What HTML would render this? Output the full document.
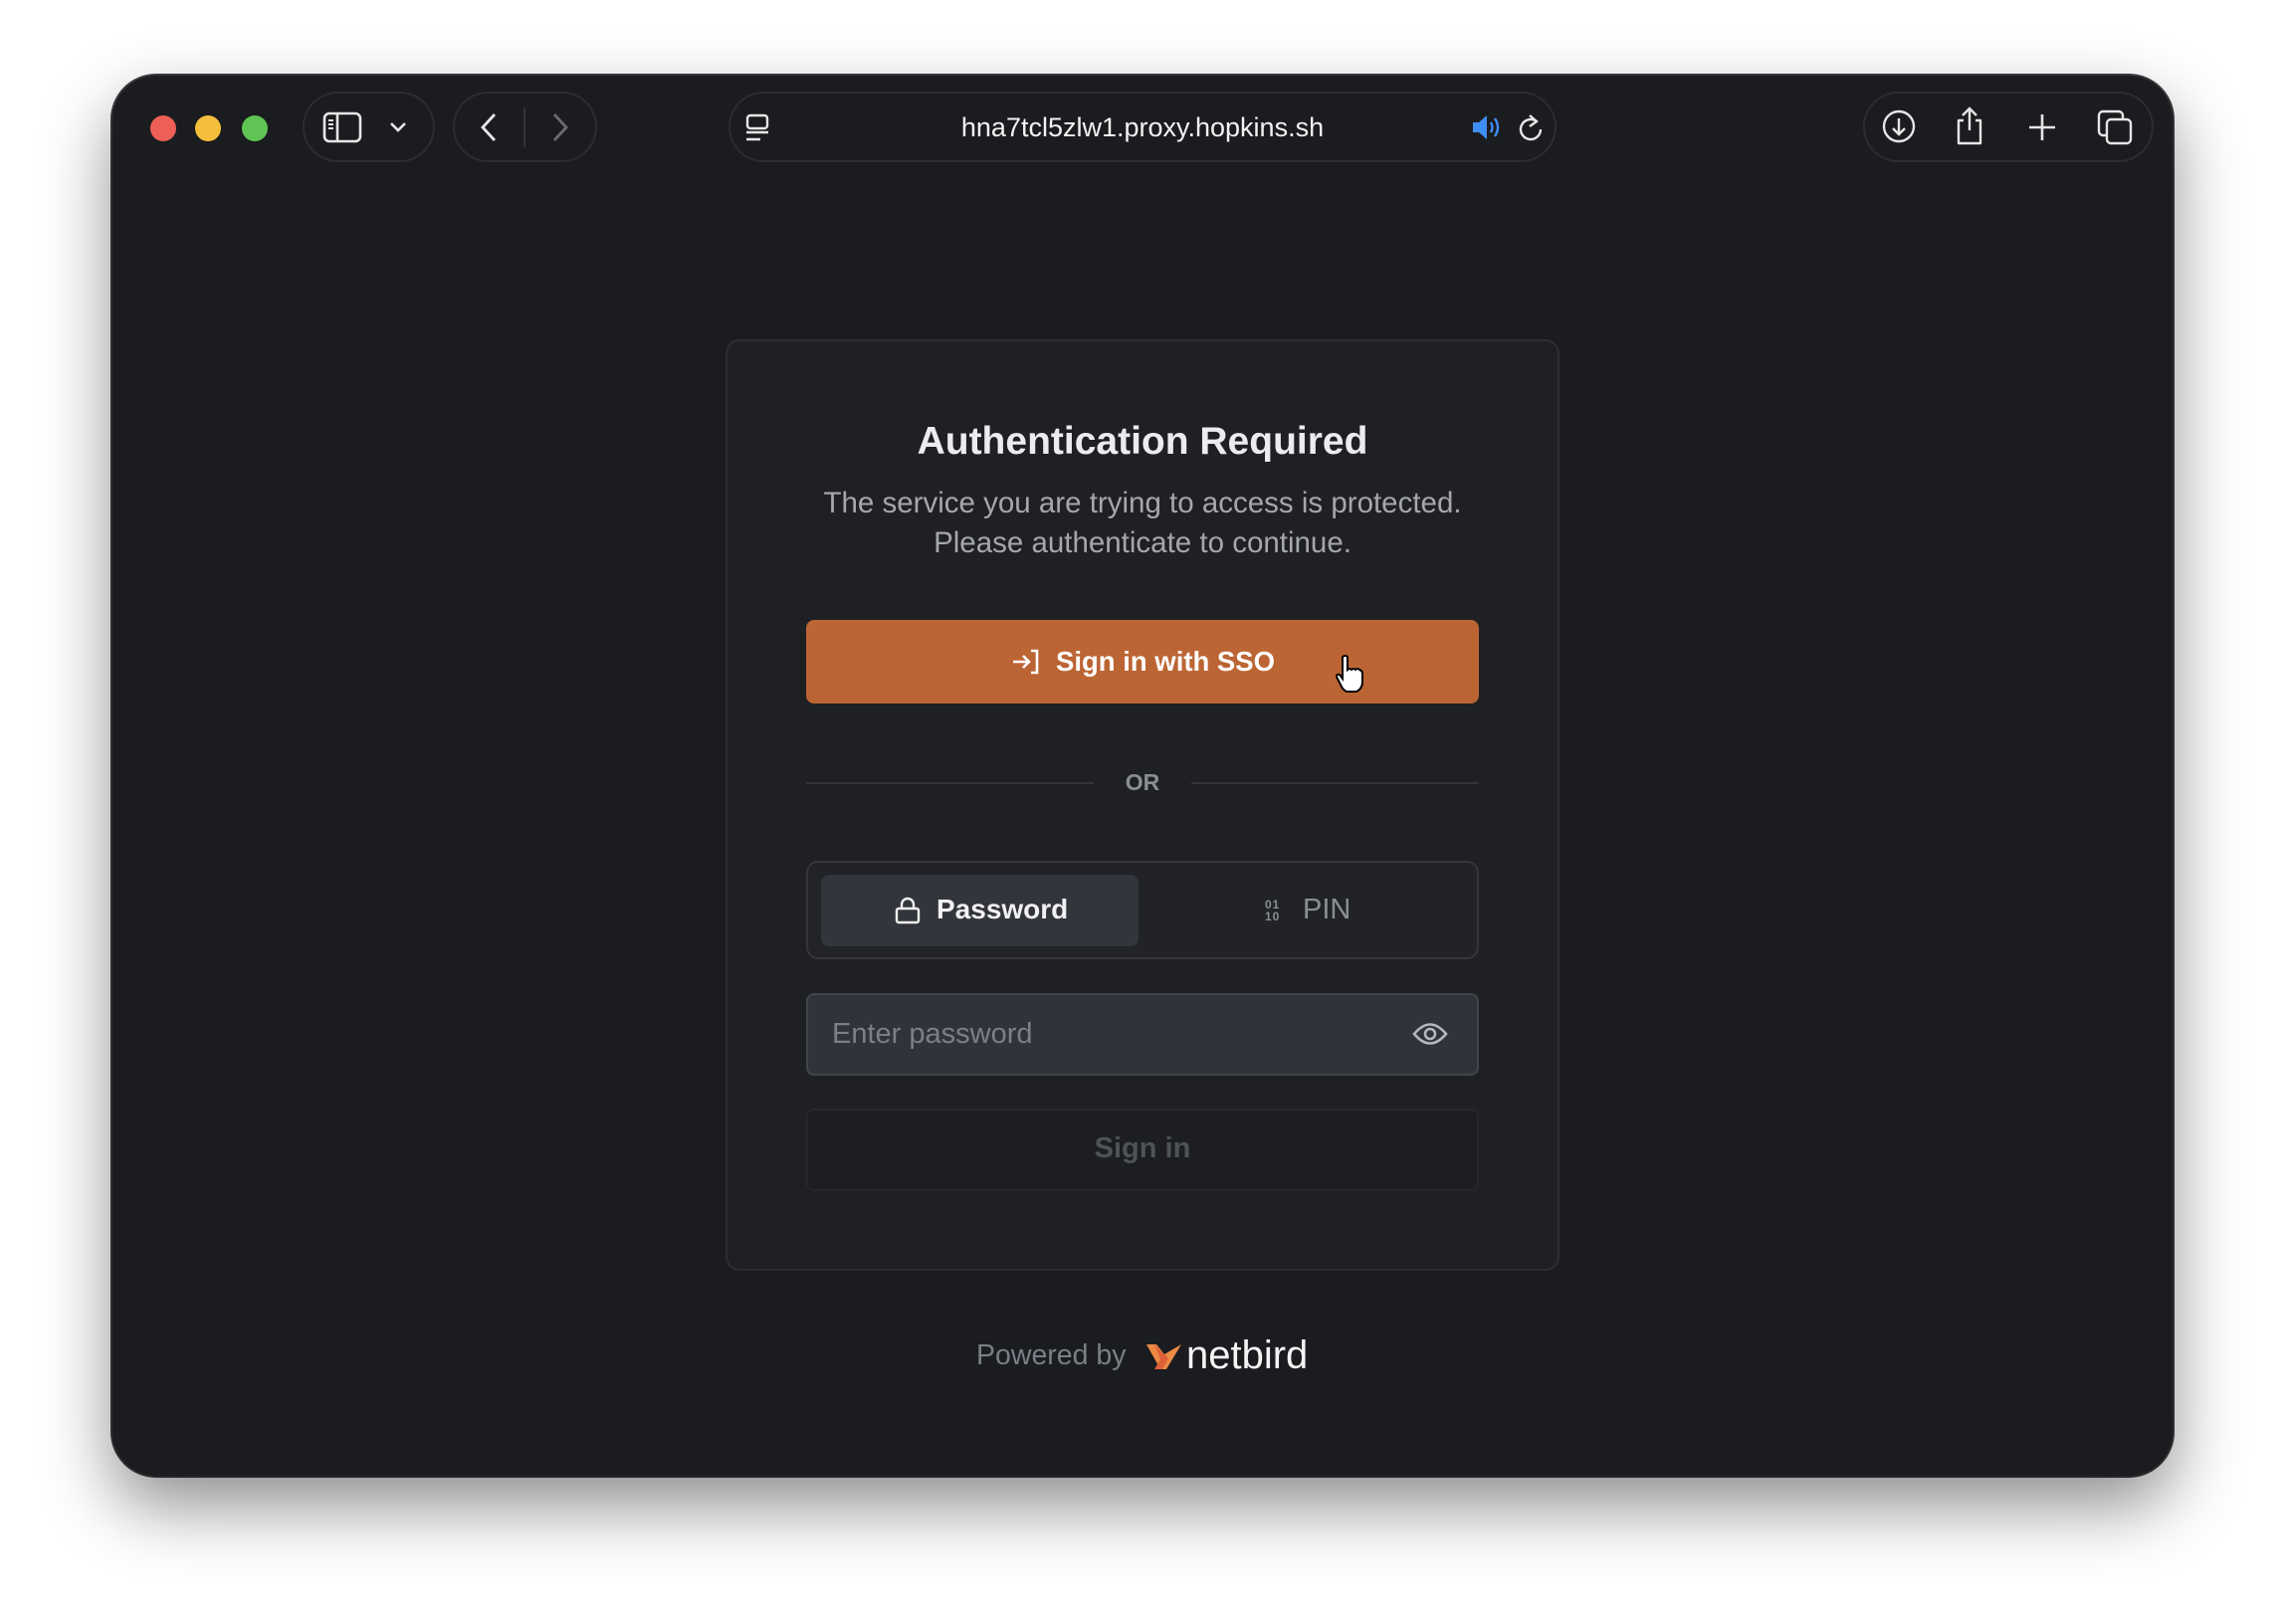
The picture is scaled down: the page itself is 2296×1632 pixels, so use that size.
<!DOCTYPE html>
<html><head><meta charset="utf-8"><style>
*{margin:0;padding:0;box-sizing:border-box}
html,body{width:2296px;height:1632px;background:#fff;overflow:hidden;font-family:"Liberation Sans",sans-serif}
.win{position:absolute;left:113px;top:76px;width:2070px;height:1407px;background:#1b1c1f;border-radius:44px;box-shadow:0 30px 70px rgba(0,0,0,.45),0 0 0 2px #3a3b3e;overflow:hidden}
.abs{position:absolute}
.dot{position:absolute;top:116px;width:26px;height:26px;border-radius:50%}
.pill{position:absolute;top:92px;height:71px;border:2px solid #2c2d31;border-radius:36px}
svg{position:absolute;overflow:visible}
.card{position:absolute;left:729px;top:341px;width:838px;height:936px;background:#1f2024;border:2px solid #2c2e33;border-radius:14px}
.c{position:absolute;left:0;width:100%;text-align:center}
</style></head><body>
<div class="win"></div>
<div class="dot" style="left:151px;background:#ed5f57"></div>
<div class="dot" style="left:196px;background:#f4be3b"></div>
<div class="dot" style="left:243px;background:#5fc453"></div>

<div class="pill" style="left:304px;width:133px"></div>
<svg style="left:324px;top:112px" width="40" height="32" viewBox="0 0 40 32"><rect x="2" y="2" width="36" height="28" rx="5" fill="none" stroke="#e6e6e6" stroke-width="2.6"/><line x1="15" y1="2" x2="15" y2="30" stroke="#e6e6e6" stroke-width="2.6"/><path d="M6 9h5M6 13h5M6 17h5" stroke="#e6e6e6" stroke-width="2"/></svg>
<svg style="left:391px;top:122px" width="18" height="12" viewBox="0 0 18 12"><path d="M2 2l7 7 7-7" fill="none" stroke="#e6e6e6" stroke-width="2.6"/></svg>

<div class="pill" style="left:455px;width:145px"></div>
<svg style="left:482px;top:113px" width="18" height="30" viewBox="0 0 18 30"><path d="M15 2L3 15l12 13" fill="none" stroke="#e6e6e6" stroke-width="2.8"/></svg>
<div class="abs" style="left:526px;top:108px;width:2px;height:40px;background:#333"></div>
<svg style="left:554px;top:113px" width="18" height="30" viewBox="0 0 18 30"><path d="M3 2l12 13L3 28" fill="none" stroke="#6a6b6e" stroke-width="2.8"/></svg>

<div class="pill" style="left:732px;width:832px"></div>
<svg style="left:749px;top:114px" width="24" height="30" viewBox="0 0 24 30"><rect x="2" y="2" width="20" height="13" rx="3" fill="none" stroke="#e6e6e6" stroke-width="2.4"/><path d="M1 19h22M1 26h14" stroke="#e6e6e6" stroke-width="2.4"/></svg>
<div class="abs" style="left:832px;top:110px;width:632px;text-align:center;color:#f2f2f2;font-size:27px;line-height:36px">hna7tcl5zlw1.proxy.hopkins.sh</div>
<svg style="left:1479px;top:115px" width="30" height="26" viewBox="0 0 30 26"><path d="M1 8h6l8-7v24l-8-7H1z" fill="#3f8ef5"/><path d="M19 8q3 5 0 10M23 4q6 9 0 18" fill="none" stroke="#3f8ef5" stroke-width="2.4"/></svg>
<svg style="left:1524px;top:114px" width="28" height="30" viewBox="0 0 28 30"><path d="M20 8A10 10 0 1 0 24 16" fill="none" stroke="#e6e6e6" stroke-width="2.4"/><path d="M13 2l7 6-7 5" fill="none" stroke="#e6e6e6" stroke-width="2.4"/></svg>

<div class="pill" style="left:1872px;width:292px"></div>
<svg style="left:1891px;top:110px" width="34" height="34" viewBox="0 0 34 34"><circle cx="17" cy="17" r="15" fill="none" stroke="#e6e6e6" stroke-width="2.4"/><path d="M17 9v16M11 19l6 6 6-6" fill="none" stroke="#e6e6e6" stroke-width="2.4"/></svg>
<svg style="left:1963px;top:107px" width="32" height="40" viewBox="0 0 32 40"><path d="M10 14H5v23h22V14h-5" fill="none" stroke="#e6e6e6" stroke-width="2.4" stroke-linejoin="round"/><path d="M16 2v22M9 9l7-7 7 7" fill="none" stroke="#e6e6e6" stroke-width="2.4"/></svg>
<svg style="left:2038px;top:114px" width="28" height="28" viewBox="0 0 28 28"><path d="M14 1v26M1 14h26" stroke="#e6e6e6" stroke-width="2.6"/></svg>
<svg style="left:2107px;top:110px" width="36" height="36" viewBox="0 0 36 36"><rect x="2" y="2" width="24" height="24" rx="4" fill="none" stroke="#e6e6e6" stroke-width="2.4"/><rect x="10" y="10" width="24" height="24" rx="4" fill="#1b1c1f" stroke="#e6e6e6" stroke-width="2.4"/></svg>

<div class="card">
 <div class="c" style="top:74px;color:#ececee;font-size:39px;font-weight:bold;line-height:54px">Authentication Required</div>
 <div class="c" style="top:143px;color:#a5a7ac;font-size:29.5px;line-height:40px">The service you are trying to access is protected.<br>Please authenticate to continue.</div>
 <div class="abs" style="left:79px;top:280px;width:676px;height:84px;background:#bc6534;border-radius:8px"></div>
 <svg style="left:285px;top:308px" width="30" height="28" viewBox="0 0 30 28"><path d="M2 14h16M12 8l6 6-6 6M20 3h6v22h-6" fill="none" stroke="#fff" stroke-width="2.6"/></svg>
 <div class="abs" style="left:330px;top:300px;color:#fff;font-size:27.5px;font-weight:bold;line-height:44px">Sign in with SSO</div>
 <svg style="left:610px;top:314px" width="30" height="40" viewBox="0 0 30 40"><path d="M8 3q3-2 5 0v13q2-2 4 0 2-2 4 0 2-2 4 0 3 1 3 4v8q0 7-6 10H12q-4-2-6-7L2 23q0-3 3-2l3 4z" fill="#fff" stroke="#000" stroke-width="2"/></svg>
 <div class="abs" style="left:79px;top:443px;width:289px;height:2px;background:#33353a"></div>
 <div class="abs" style="left:466px;top:443px;width:289px;height:2px;background:#33353a"></div>
 <div class="c" style="top:427px;color:#8a8d93;font-size:23px;font-weight:bold;line-height:32px">OR</div>
 <div class="abs" style="left:79px;top:522px;width:676px;height:99px;border:2px solid #34363b;border-radius:12px;background:#222327"></div>
 <div class="abs" style="left:94px;top:536px;width:319px;height:72px;background:#33353c;border-radius:8px"></div>
 <svg style="left:168px;top:558px" width="26" height="28" viewBox="0 0 26 28"><rect x="2" y="12" width="22" height="14" rx="2" fill="none" stroke="#eee" stroke-width="2.4"/><path d="M7 12V8a6 6 0 0 1 12 0v4" fill="none" stroke="#eee" stroke-width="2.4"/></svg>
 <div class="abs" style="left:210px;top:551px;color:#f1f1f3;font-size:28px;font-weight:bold;line-height:40px">Password</div>
 <div class="abs" style="left:540px;top:560px;color:#8b8e94;font-size:12px;font-weight:bold;line-height:12px;letter-spacing:1px">01<br>10</div>
 <div class="abs" style="left:578px;top:551px;color:#8b8e94;font-size:29px;line-height:40px">PIN</div>
 <div class="abs" style="left:79px;top:655px;width:676px;height:83px;border:2px solid #42454c;border-radius:8px;background:#31333a"></div>
 <div class="abs" style="left:105px;top:676px;color:#7c7f86;font-size:29px;line-height:40px">Enter password</div>
 <svg style="left:688px;top:683px" width="36" height="26" viewBox="0 0 36 26"><path d="M2 13Q18-6 34 13Q18 32 2 13z" fill="none" stroke="#b5b7bc" stroke-width="2.6"/><circle cx="18" cy="13" r="5" fill="none" stroke="#b5b7bc" stroke-width="2.6"/></svg>
 <div class="abs" style="left:79px;top:771px;width:676px;height:83px;border:2px solid #25272b;border-radius:8px;background:#1d1e22"></div>
 <div class="c" style="top:791px;color:#4f5258;font-size:29px;font-weight:bold;line-height:40px">Sign in</div>
</div>

<div class="abs" style="left:981px;top:1342px;color:#7a7f87;font-size:28.5px;line-height:40px">Powered by</div>
<svg style="left:1152px;top:1349px" width="37" height="28" viewBox="0 0 37 28"><path d="M0 2l10 0 8 10L35 2 20 27 14 27z" fill="#ed8a45"/><path d="M8 2l14 14-6 11h-8l6-10z" fill="#e0603a"/></svg>
<div class="abs" style="left:1192px;top:1337px;color:#f4f4f4;font-size:40px;line-height:50px">netbird</div>
</body></html>
